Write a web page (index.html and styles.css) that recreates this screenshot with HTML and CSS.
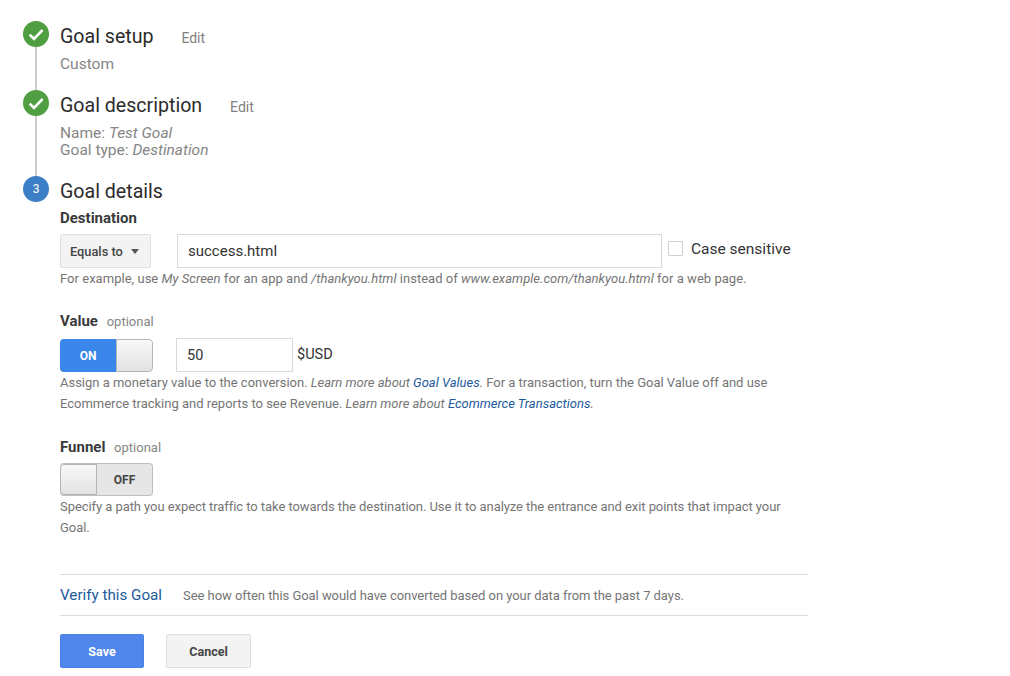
FILE: index.html
```html
<!DOCTYPE html>
<html lang="en">
<head>
<meta charset="utf-8">
<title>Goal details</title>
<link rel="stylesheet" href="styles.css">
</head>
<body>
<main class="steps">
  <section class="step step-setup">
    <div class="marker">
      <span class="circle done"><svg viewBox="0 0 26 26" width="26" height="26"><path d="M6.6 13.6l4.4 4.2 8.6-8.8" fill="none" stroke="#fff" stroke-width="2.6"/></svg></span>
      <span class="line"></span>
    </div>
    <div class="body">
      <h2 class="title">Goal setup <a class="edit">Edit</a></h2>
      <p class="summary">Custom</p>
    </div>
  </section>
  <section class="step step-desc">
    <div class="marker">
      <span class="circle done"><svg viewBox="0 0 26 26" width="26" height="26"><path d="M6.6 13.6l4.4 4.2 8.6-8.8" fill="none" stroke="#fff" stroke-width="2.6"/></svg></span>
      <span class="line"></span>
    </div>
    <div class="body">
      <h2 class="title">Goal description <a class="edit">Edit</a></h2>
      <p class="summary tight">Name: <em>Test Goal</em><br>Goal type: <em>Destination</em></p>
    </div>
  </section>
  <section class="step">
    <div class="marker">
      <span class="circle current">3</span>
    </div>
    <div class="body">
      <h2 class="title">Goal details</h2>

      <h3 class="label label-dest">Destination</h3>
      <div class="row row-dest">
        <div class="select">Equals to <span class="caret"></span></div>
        <div class="input input-wide">success.html</div>
        <span class="checkbox"></span>
        <span class="check-label">Case sensitive</span>
      </div>
      <p class="hint hint-dest">For example, use <em>My Screen</em> for an app and <em>/thankyou.html</em> instead of <em>www.example.com/thankyou.html</em> for a web page.</p>

      <h3 class="label label-value">Value <span class="optional">optional</span></h3>
      <div class="row row-value">
        <div class="toggle on"><span class="toggle-text">ON</span><span class="knob"></span></div>
        <div class="input input-small">50</div>
        <span class="unit">$USD</span>
      </div>
      <p class="hint hint-value">Assign a monetary value to the conversion. <em>Learn more about <a class="link">Goal Values</a>.</em> For a transaction, turn the Goal Value off and use<br>Ecommerce tracking and reports to see Revenue. <em>Learn more about <a class="link">Ecommerce Transactions</a>.</em></p>

      <h3 class="label label-funnel">Funnel <span class="optional">optional</span></h3>
      <div class="row row-funnel">
        <div class="toggle off"><span class="knob"></span><span class="toggle-text">OFF</span></div>
      </div>
      <p class="hint hint-funnel">Specify a path you expect traffic to take towards the destination. Use it to analyze the entrance and exit points that impact your<br>Goal.</p>

      <div class="verify">
        <a class="verify-link">Verify this Goal</a>
        <span class="verify-text">See how often this Goal would have converted based on your data from the past 7 days.</span>
      </div>

      <div class="actions">
        <button class="btn primary" type="button">Save</button>
        <button class="btn" type="button">Cancel</button>
      </div>
    </div>
  </section>
</main>
</body>
</html>
```
FILE: styles.css
```css
* { box-sizing: border-box; }
html, body { margin: 0; padding: 0; background: #fff; }
body {
  font-family: Roboto, "Liberation Sans", sans-serif;
  color: #212121;
  height: 676px;
  overflow: hidden;
}
.steps { padding: 21px 0 0 23px; }
.step { display: flex; gap: 11px; }
.step-setup { height: 69px; }
.step-desc { height: 86px; }
.marker { display: flex; flex-direction: column; align-items: center; width: 26px; flex: none; }
.circle {
  width: 26px; height: 26px; border-radius: 50%; flex: none;
  display: flex; align-items: center; justify-content: center;
  color: #fff; font-size: 12px;
}
.done { background: #4f9e41; }
.current { background: #3d7fc6; }
.line { flex: 1; width: 2px; background: #cccccc; }
.body { width: 748px; flex: none; }
.title {
  margin: 0; font-size: 19.6px; font-weight: 400; line-height: 32px; color: #2b2b2b;
}
.edit { font-size: 14px; color: #808080; margin-left: 23px; }
.summary { margin: 1px 0 0; font-size: 15.5px; line-height: 18px; color: #858585; }
.summary.tight { line-height: 17px; margin-top: 2px; }
.label { margin: 0; font-size: 15px; font-weight: 700; line-height: 18px; color: #3a3a3a; }
.label-dest { margin-top: 1px; }
.label-value { margin-top: 23px; }
.label-funnel { margin-top: 24px; }
.optional { font-size: 13px; font-weight: 400; color: #858585; margin-left: 5px; }
.row { display: flex; align-items: flex-start; height: 34px; }
.row-dest { margin-top: 7px; }
.row-value { margin-top: 7px; }
.row-funnel { margin-top: 6px; height: 33px; }
.select {
  width: 91px; height: 34px; background: #f3f3f3; border: 1px solid #e0e0e0; border-radius: 2px;
  display: flex; align-items: center; padding-left: 9px;
  font-size: 12.8px; font-weight: 500; color: #444;
}
.caret {
  width: 0; height: 0; margin-left: 8px; margin-top: 1px;
  border-left: 4.5px solid transparent; border-right: 4.5px solid transparent; border-top: 5px solid #555;
}
.input {
  height: 34px; border: 1px solid #d9d9d9; background: #fff; display: flex; align-items: center;
  color: #333;
}
.input-wide { width: 485px; margin-left: 26px; padding-left: 10px; font-size: 15px; }
.input-small { width: 117px; margin-left: 23px; padding-left: 10px; font-size: 14.5px; }
.checkbox { width: 15px; height: 15px; border: 1px solid #cfcfcf; margin: 7px 0 0 6px; border-radius: 1px; }
.check-label { font-size: 15.5px; line-height: 18px; margin: 6px 0 0 8px; color: #333; }
.unit { font-size: 14.5px; line-height: 34px; color: #333; margin-left: 4px; }
.hint { margin: 0; font-size: 13px; line-height: 21px; color: #757575; }
.hint-dest { letter-spacing: 0.03px; }
.hint-value { letter-spacing: -0.01px; }
.hint-funnel { letter-spacing: -0.065px; }
.link { color: #1c5a9c; }
.toggle {
  width: 93px; height: 33px; margin-top: 1px; border-radius: 4px; display: flex; align-items: stretch; overflow: hidden;
  font-size: 12px; font-weight: 700;
}
.row-funnel .toggle { margin-top: 0; }
.toggle.on { color: #fff; }
.toggle.on .toggle-text { background: #3b86ea; }
.toggle.off { background: #e6e6e6; color: #444; border: 1px solid #bdbdbd; border-left: 0; }
.toggle-text { flex: 1; display: flex; align-items: center; justify-content: center; }
.knob {
  width: 37px; background: linear-gradient(#f8f8f8, #e2e2e2); border: 1px solid #b5b5b5; border-radius: 0 4px 4px 0;
}
.toggle.off .knob { border-radius: 4px 0 0 4px; }
.verify {
  margin-top: 36px; height: 42px; border-top: 1px solid #dcdcdc; border-bottom: 1px solid #dcdcdc;
  display: flex; align-items: center;
}
.verify-link { font-size: 15.2px; color: #1c5a9c; }
.verify-text { font-size: 13px; color: #757575; margin-left: 21px; letter-spacing: -0.05px; }
.actions { display: flex; gap: 22px; margin-top: 18px; }
.btn {
  width: 85px; height: 34px; border: 1px solid #dedede; border-radius: 2px; background: #f3f3f3;
  font-family: inherit; font-size: 12.5px; font-weight: 700; color: #444; padding: 0;
}
.btn.primary { width: 84px; background: #4f86ec; border-color: #4a80e0; color: #fff; }
```
